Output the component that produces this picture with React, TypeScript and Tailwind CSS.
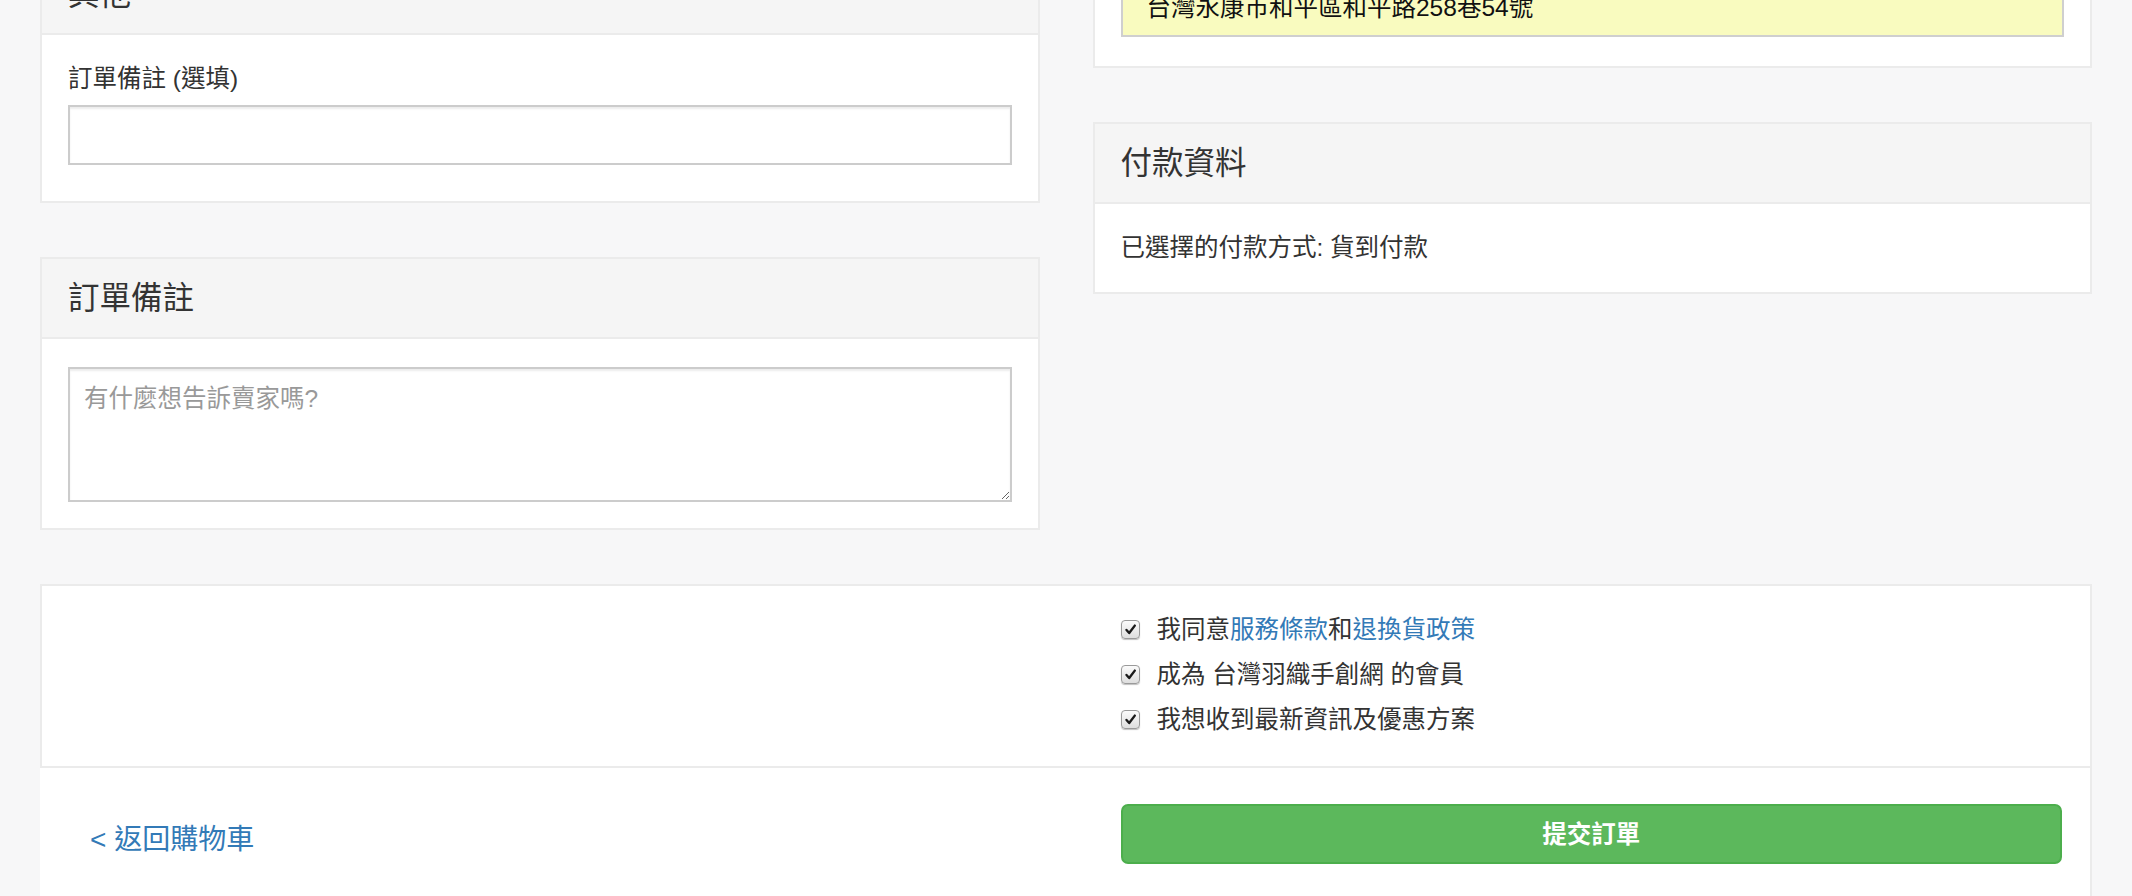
import React from 'react';

const FONT = "font-['Liberation_Sans','Noto_Sans_CJK_TC',sans-serif]";

function PanelHeader({ title }: { title: string }) {
  return (
    <div className="h-[80px] flex items-center px-[26px] bg-[#f5f5f5] border-b-2 border-[#ebebeb]">
      <h3 className="text-[31.5px] leading-[1.1] font-normal text-[#333]">{title}</h3>
    </div>
  );
}

function Check() {
  return (
    <span className="w-[19px] h-[19px] shrink-0 rounded-[4px] border border-[#9a9a9a] bg-gradient-to-b from-[#fbfbfb] to-[#dedede] shadow-[0_1px_1px_rgba(0,0,0,0.25)] flex items-center justify-center">
      <svg width="13" height="13" viewBox="0 0 13 13" fill="none">
        <path d="M2.5 7 L5.2 10 L10.8 2.6" stroke="#1a1a1a" strokeWidth="2.4" strokeLinecap="round" strokeLinejoin="round" />
      </svg>
    </span>
  );
}

export default function App() {
  return (
    <div className={`min-h-screen overflow-hidden bg-[#f7f7f8] text-[#333] text-[24.5px] leading-[35px] ${FONT}`}>
      <div className="-mt-[50px] px-[40px]">
        <div className="grid grid-cols-2 gap-x-[53px] items-start">
          {/* left column */}
          <div className="flex flex-col gap-[54px] mt-[3px]">
            <div className="bg-white border-2 border-[#ebebeb]">
              <PanelHeader title="其他" />
              <div className="px-[26px] pt-[26px] pb-[36px]">
                <label className="block mb-[9px]">訂單備註 (選填)</label>
                <input
                  type="text"
                  className="block w-full h-[60px] px-[14px] border-2 border-[#ccc] bg-white shadow-[inset_0_2px_2px_rgba(0,0,0,0.075)] outline-none"
                />
              </div>
            </div>

            <div className="bg-white border-2 border-[#ebebeb]">
              <PanelHeader title="訂單備註" />
              <div className="px-[26px] pt-[28px] pb-[26px]">
                <textarea
                  placeholder="有什麼想告訴賣家嗎?"
                  className="block w-full h-[135px] px-[14px] py-[12px] border-2 border-[#ccc] bg-white shadow-[inset_0_2px_2px_rgba(0,0,0,0.075)] outline-none placeholder:text-[#999] leading-[35px]"
                />
              </div>
            </div>
          </div>

          {/* right column */}
          <div className="flex flex-col gap-[54px]">
            <div className="bg-white border-2 border-[#ebebeb]">
              <div className="px-[26px] pt-[26px] pb-[29px]">
                <div className="h-[59px] flex items-center pl-[24px] bg-[#f9fbbf] border-2 border-[#cfcfcf] text-[#111]">
                  台灣永康市和平區和平路258巷54號
                </div>
              </div>
            </div>

            <div className="bg-white border-2 border-[#ebebeb]">
              <PanelHeader title="付款資料" />
              <div className="px-[26px] pt-[26px] pb-[27px]">
                <p>已選擇的付款方式: 貨到付款</p>
              </div>
            </div>
          </div>
        </div>

        {/* bottom panel */}
        <div className="mt-[54px]">
          <div className="bg-white border-2 border-[#ebebeb] grid grid-cols-2 gap-x-[53px]">
            <div />
            <div className="px-[28px] pt-[26px] pb-[29px] flex flex-col gap-[10px]">
              <label className="flex items-center gap-[17px] h-[35px]">
                <Check />
                <span>
                  我同意<a className="text-[#337ab7]">服務條款</a>和<a className="text-[#337ab7]">退換貨政策</a>
                </span>
              </label>
              <label className="flex items-center gap-[17px] h-[35px]">
                <Check />
                <span>成為 台灣羽織手創網 的會員</span>
              </label>
              <label className="flex items-center gap-[17px] h-[35px]">
                <Check />
                <span>我想收到最新資訊及優惠方案</span>
              </label>
            </div>
          </div>
          <div className="bg-white border-r-2 border-b-2 border-[#ebebeb] pl-[2px] grid grid-cols-2 gap-x-[53px]">
            <div className="flex items-center pl-[48px] pt-[13px]">
              <a className="text-[28px] leading-[40px] text-[#337ab7]">&lt; 返回購物車</a>
            </div>
            <div className="px-[28px] pt-[36px] pb-[35px]">
              <button className="w-full h-[60px] rounded-[7px] bg-[#5cb85c] border-2 border-[#4cae4c] text-white font-bold">
                提交訂單
              </button>
            </div>
          </div>
        </div>
      </div>
    </div>
  );
}
